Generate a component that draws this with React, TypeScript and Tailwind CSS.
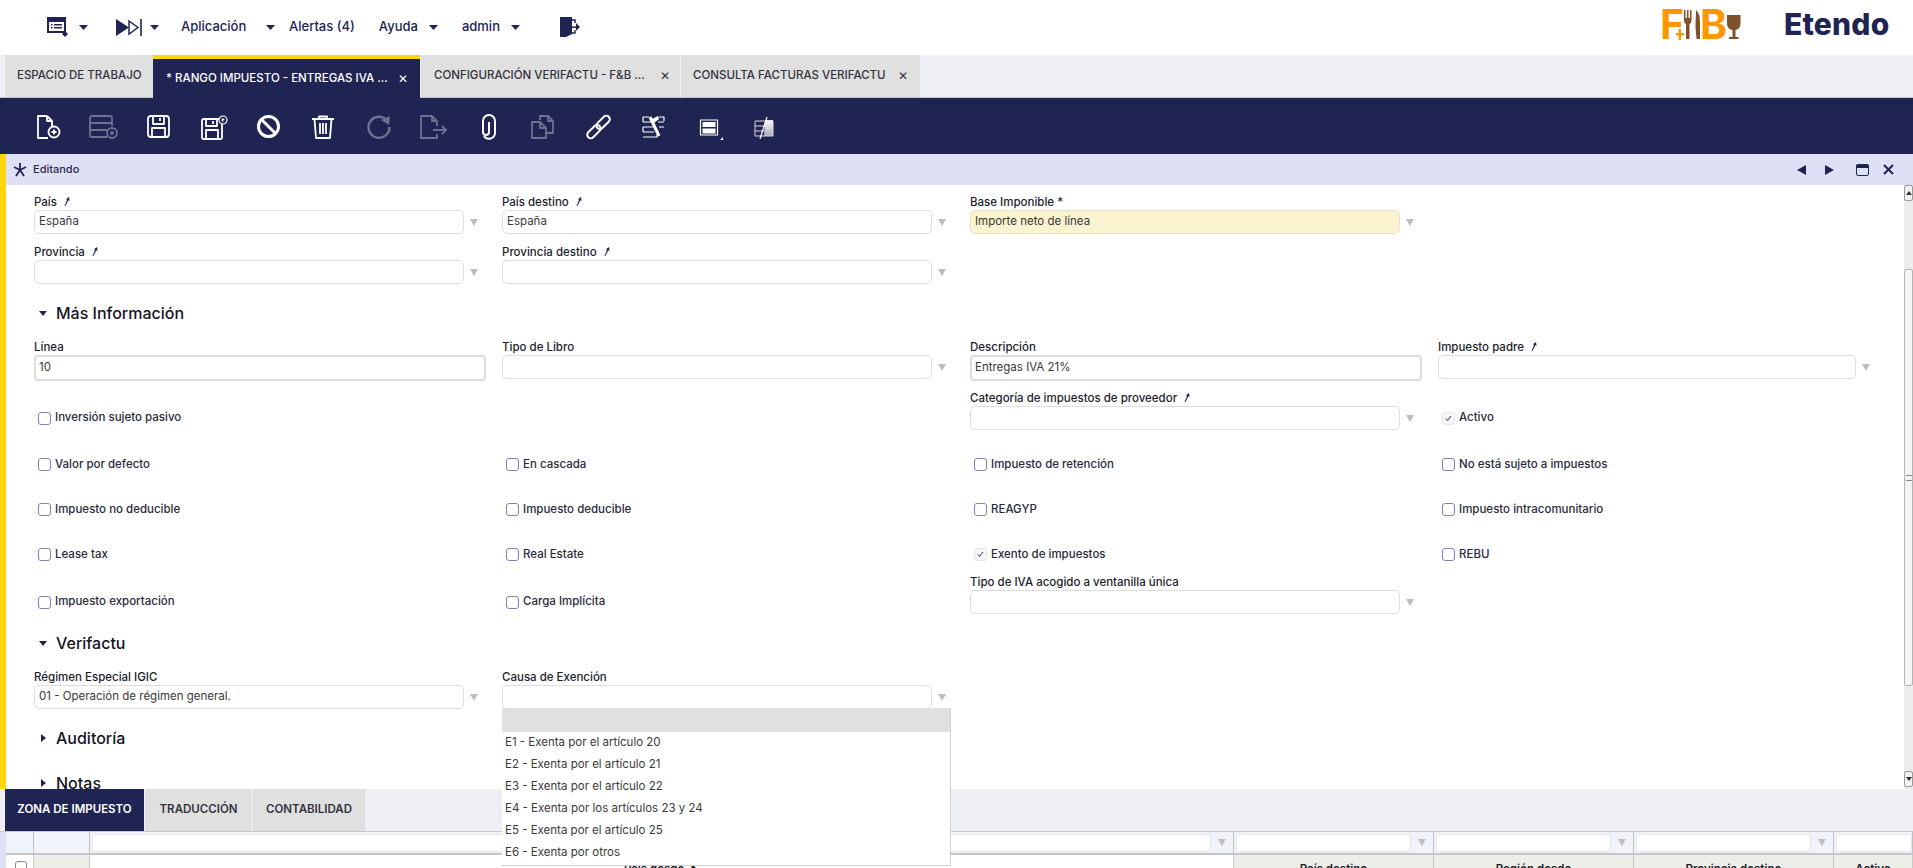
import type { ReactNode } from 'react'

const grey = '#6e7190'

function Caret({ color = '#202452' }: { color?: string }) {
  return (
    <svg width="9" height="5" viewBox="0 0 9 5" className="shrink-0">
      <path d="M0 0h9L4.5 5z" fill={color} />
    </svg>
  )
}

function Arrow() {
  return (
    <svg width="8" height="7" viewBox="0 0 8 7" className="shrink-0 ml-[6px]">
      <path d="M0 0h8L4 7z" fill="#bdbdbd" />
    </svg>
  )
}

function Pin() {
  return (
    <svg width="8" height="11" viewBox="0 0 8 11" className="inline-block ml-[6px] align-[-1px]">
      <path d="M1.5 10L4.2 3.6 2.6 3.4 6 1 6.6 5 5.4 4.2 2.4 10z" fill="#202452" />
    </svg>
  )
}

function Select({ value, required }: { value?: string; required?: boolean }) {
  return (
    <div className="flex items-center">
      <div className={`w-[430px] h-[24px] rounded-[5px] border flex items-center px-[4px] text-[11.5px] text-[#3a3a3a] ${required ? 'bg-[#faf3cf] border-[#e6e2c2]' : 'bg-white border-[#dedede]'}`}>
        {value}
      </div>
      <Arrow />
    </div>
  )
}

function TextInput({ value }: { value: string }) {
  return (
    <div className="w-[452px] h-[26px] rounded-[4px] border-2 border-[#dddddd] bg-white flex items-center px-[3px] text-[11.5px] text-[#3a3a3a]">
      {value}
    </div>
  )
}

function Label({ text, pin }: { text: string; pin?: boolean }) {
  return (
    <div className="h-[16px] leading-[16px] text-[11.5px] font-medium text-[#1d1d2e] whitespace-nowrap">
      {text}
      {pin && <Pin />}
    </div>
  )
}

function Check({ text, checked }: { text: string; checked?: boolean }) {
  return (
    <div className="flex items-center h-[24px] pl-[4px] text-[11.5px] font-medium text-[#2a2a3a] whitespace-nowrap">
      {checked ? (
        <span className="w-[13px] h-[13px] mr-[4px] rounded-[3px] border border-[#e6e6ec] bg-[#f7f7fa] flex items-center justify-center">
          <svg width="7" height="7" viewBox="0 0 7 7">
            <path d="M1 3.5l1.6 2L6 1" fill="none" stroke="#34345a" strokeWidth="1" />
          </svg>
        </span>
      ) : (
        <span className="w-[13px] h-[13px] mr-[4px] rounded-[3px] border border-[#8083b8] bg-white" />
      )}
      {text}
    </div>
  )
}

function Section({ text, open }: { text: string; open?: boolean }) {
  return (
    <div className="h-[45px]">
      <div className="h-[37px] flex items-center text-[#14141f] text-[16px] font-medium whitespace-nowrap">
        <svg width="8" height="8" viewBox="0 0 8 8" className="ml-[5px] mr-[9px]">
          <path d={open ? 'M0 2h8L4 7z' : 'M2 0l5 4-5 4z'} fill="#202452" />
        </svg>
        {text}
      </div>
    </div>
  )
}

function Row({ h, children, className = '' }: { h: string; children: ReactNode; className?: string }) {
  return <div className={`grid grid-cols-[468px_468px_468px_432px] ${h} ${className}`}>{children}</div>
}

function Field({ label, pin, value, required }: { label: string; pin?: boolean; value?: string; required?: boolean }) {
  return (
    <div>
      <Label text={label} pin={pin} />
      <Select value={value} required={required} />
    </div>
  )
}

function Tool({ children }: { children: ReactNode }) {
  return (
    <div className="w-[55px] shrink-0">
      <svg width="34" height="28" viewBox="0 0 34 28" fill="none" stroke="white" strokeWidth="1.8" strokeLinejoin="round">
        {children}
      </svg>
    </div>
  )
}

function Toolbar() {
  return (
    <div className="h-[56px] bg-[#202452] flex pl-[32px] pt-[15px] shrink-0">
      <Tool>
        <path d="M15 3H6v22h10M15 3l5 5v6M15 3v5h5" />
        <circle cx="22" cy="19" r="5.5" />
        <path d="M22 16.5v5M19.5 19h5" />
      </Tool>
      <Tool>
        <g stroke={grey}>
          <path d="M25 13V5a2 2 0 0 0-2-2H5a2 2 0 0 0-2 2v17a2 2 0 0 0 2 2h15M3 10h22M3 17h17" />
          <circle cx="25" cy="20" r="5" />
          <path d="M25 18v4M23 20h4" />
        </g>
      </Tool>
      <Tool>
        <rect x="6" y="3" width="21" height="21" rx="3" />
        <path d="M11 3v8h11V3M18 5v3M10 24v-9h13v9" />
      </Tool>
      <Tool>
        <rect x="5" y="6" width="20" height="20" rx="1.5" />
        <path d="M9 6v7h11V6M16 8v3M9 26v-9h12v9" />
        <circle cx="26" cy="7" r="4" fill="#202452" strokeWidth="1.2" />
        <path d="M24.7 5.7l2.6 2.6M27.3 5.7l-2.6 2.6" strokeWidth="1.2" />
      </Tool>
      <Tool>
        <circle cx="16.5" cy="13.5" r="10" strokeWidth="3" />
        <path d="M9.5 6.5l14 14" strokeWidth="3" />
      </Tool>
      <Tool>
        <path d="M5 6h22M12 6V3.5h8V6M7.5 6L9 25h14l1.5-19M13 10v11M16 10v11M19 10v11" />
      </Tool>
      <Tool>
        <path d="M24 6.5A10.5 10.5 0 1 0 27.5 14" stroke={grey} strokeWidth="2.4" />
        <path d="M19 7l9-4-1 9z" fill={grey} stroke="none" />
      </Tool>
      <Tool>
        <g stroke={grey}>
          <path d="M15 3H4v22h16v-4M15 3l5 5v5M15 3v5h5M16 17h12M25 13l4 4-4 4" />
        </g>
      </Tool>
      <Tool>
        <path d="M17 9v10a3 3 0 0 1-6 0V8a6 6 0 0 1 12 0v12a6 6 0 0 1-11 3" strokeWidth="2" />
      </Tool>
      <Tool>
        <g stroke={grey}>
          <path d="M13 7V3h8l5 5v12h-7M21 3v5h5M5 9h8l6 6v10H5zM13 9v6h6" />
        </g>
      </Tool>
      <Tool>
        <g transform="rotate(-45 16.5 14)" strokeWidth="2">
          <rect x="2" y="10.5" width="16" height="7" rx="3.5" />
          <rect x="15" y="10.5" width="16" height="7" rx="3.5" />
        </g>
      </Tool>
      <Tool>
        <path d="M6 4h6M22 4h5v4M6 9h8M21 9h6M6 14h10M22 14h5M6 19h11M6 24h14V22M6 4v5M6 14v5" strokeWidth="1.2" />
        <path d="M13 4l9 19" strokeWidth="3" />
        <path d="M21 3l-6 3 2 4 5-4z" fill="white" stroke="none" />
      </Tool>
      <Tool>
        <rect x="8.5" y="7" width="17" height="15" strokeWidth="1.2" />
        <rect x="10.5" y="9" width="13" height="5" fill="white" stroke="none" />
        <rect x="10.5" y="15.5" width="13" height="5" fill="white" stroke="none" />
        <path d="M31 24v3h-3z" fill="white" stroke="none" />
      </Tool>
      <Tool>
        <defs>
          <linearGradient id="fade" x1="0" y1="0" x2="0" y2="1">
            <stop offset="0" stopColor="#ffffff" />
            <stop offset="1" stopColor="#a9a9b5" />
          </linearGradient>
        </defs>
        <path d="M18 7h8v16h-9z" fill="url(#fade)" stroke="none" />
        <path d="M8 8h18v15H8zM8 13h10M8 18h9" stroke="#d8d8de" strokeWidth="1" />
        <path d="M13 26L20 4" strokeWidth="1.2" />
      </Tool>
    </div>
  )
}

function TopBar() {
  return (
    <div className="h-[55px] bg-white flex items-center shrink-0 text-[#202452] text-[13px] font-medium">
      <div className="flex items-center w-[1661px] pl-[47px] -mt-[1px]">
        <svg width="21" height="20" viewBox="0 0 21 20" className="mr-[11px]">
          <path d="M0 0h19v16H0z" fill="#202452" />
          <path d="M2 5h15v9H2z" fill="white" />
          <path d="M4 7h1.5v1.5H4zM7 7h8v1.5H7zM4 10h1.5v1.5H4zM7 10h8v1.5H7z" fill="#202452" />
          <path d="M18 14l3 3-3 3-3-3z" fill="#202452" />
        </svg>
        <Caret />
        <svg width="28" height="17" viewBox="0 0 28 17" className="ml-[27px] mr-[7px]">
          <path d="M1 0l13 8.5L1 17z" fill="#202452" />
          <path d="M14 2l9 6.5-9 6.5z" fill="none" stroke="#202452" strokeWidth="1.5" />
          <path d="M26 0v17" stroke="#202452" strokeWidth="1.6" />
        </svg>
        <Caret />
        <span className="ml-[22px] w-[85px]">Aplicación</span>
        <Caret />
        <span className="ml-[14px]">Alertas (4)</span>
        <span className="ml-[24px] mr-[11px]">Ayuda</span>
        <Caret />
        <span className="ml-[24px] mr-[11px]">admin</span>
        <Caret />
        <svg width="20" height="20" viewBox="0 0 20 20" className="ml-[40px]">
          <path d="M0 0h12v17l-6 3H0z" fill="#202452" />
          <path d="M12 3h3v3M15 13v3h-3" fill="none" stroke="#202452" strokeWidth="1.4" />
          <path d="M11 9.5h5V6l4 4-4 4v-3h-5z" fill="#202452" />
        </svg>
      </div>
      <svg width="80" height="32" viewBox="0 0 80 32" className="-mt-[5px]">
        <text x="-1" y="30" fontSize="41" fontWeight="700" fill="#ff9800" fontFamily="Inter, sans-serif">F</text>
        <path d="M15 24h2.5v-4h2.5v4h3v2.5h-3V31h-2.500v-4.500H15z" fill="#ff9800" />
        <path d="M23 1h1.500v8h1.500V1h1.500v8h1.500V1h1.500v10q0 3-2 4v15h-3.500V15q-2-1-2-4z" fill="#7d522c" />
        <path d="M35 1q4 3 4 13v16h-3.500l-1-12z" fill="#7d522c" />
        <text x="39" y="30" fontSize="41" fontWeight="700" fill="#ff9800" fontFamily="Inter, sans-serif">B</text>
        <path d="M66 6h13.500v8q0 6-5 7v7h3v2h-9.500v-2h3.500v-7q-5.500-1-5.500-7z" fill="#7d522c" />
      </svg>
      <span className="ml-[43px] text-[30px] font-extrabold tracking-[0.2px] -mt-[7px] font-[Inter,sans-serif]">Etendo</span>
    </div>
  )
}

function TabBar() {
  return (
    <div className="h-[43px] bg-[#eef0f5] flex pl-[5px] border-b border-[#c4c6cc] shrink-0 text-[11.5px] font-medium text-[#33333f] whitespace-nowrap">
      <div className="w-[148px] bg-[#e0e0e0] flex items-center pl-[12px]">ESPACIO DE TRABAJO</div>
      <div className="w-[267px] h-[43px] bg-[#202452] border-t-[4px] border-[#ffd60e] text-white flex items-center pl-[13px]">
        <span className="w-[232px]">* RANGO IMPUESTO - ENTREGAS IVA ...</span>
        <span className="text-[12px]">✕</span>
      </div>
      <div className="w-[259px] ml-[1px] bg-[#e0e0e0] flex items-center pl-[13px]">
        <span className="w-[226px]">CONFIGURACIÓN VERIFACTU - F&amp;B ...</span>
        <span className="text-[12px]">✕</span>
      </div>
      <div className="w-[239px] ml-[1px] bg-[#e0e0e0] flex items-center pl-[12px]">
        <span className="w-[205px]">CONSULTA FACTURAS VERIFACTU</span>
        <span className="text-[12px]">✕</span>
      </div>
    </div>
  )
}

function StatusBar() {
  return (
    <div className="h-[31px] bg-[#dee0f6] flex items-center shrink-0 text-[11px] font-medium text-[#2c2c48]">
      <svg width="14" height="14" viewBox="0 0 14 14" className="ml-[7px] mr-[6px]">
        <path d="M7 0v6M7 7L1 4M7 7l6-3M7 7l-4 6M7 7l4 6" stroke="#202452" strokeWidth="1.8" fill="none" />
      </svg>
      Editando
      <div className="ml-auto flex items-center pr-[19px]">
        <svg width="9" height="10" viewBox="0 0 9 10"><path d="M9 0v10L0 5z" fill="#202452" /></svg>
        <svg width="9" height="10" viewBox="0 0 9 10" className="ml-[19px]"><path d="M0 0v10l9-5z" fill="#202452" /></svg>
        <svg width="13" height="12" viewBox="0 0 13 12" className="ml-[22px]">
          <rect x="0.500" y="0.500" width="12" height="11" rx="1.500" fill="#dee0f6" stroke="#202452" />
          <rect x="0.500" y="0.500" width="12" height="3.500" fill="#202452" />
        </svg>
        <svg width="11" height="11" viewBox="0 0 11 11" className="ml-[14px]">
          <path d="M1 1l9 9M10 1l-9 9" stroke="#202452" strokeWidth="2" />
        </svg>
      </div>
    </div>
  )
}

function Scrollbar() {
  return (
    <div className="w-[9px] shrink-0 bg-[#ececec] flex flex-col pb-[2px]">
      <div className="h-[16px] shrink-0 bg-[#f2f2f2] border border-[#9a9a9a] rounded-[2px] flex items-center justify-center">
        <svg width="6" height="4" viewBox="0 0 6 4"><path d="M3 0l3 4H0z" fill="#333" /></svg>
      </div>
      <div className="h-[68px] shrink-0" />
      <div className="h-[417px] shrink-0 bg-[#f4f4f4] border border-[#b4b4b4] rounded-[2px] flex items-center justify-center">
        <div className="w-[6px] h-[6px] border-y border-[#888]" />
      </div>
      <div className="flex-1" />
      <div className="h-[16px] shrink-0 bg-[#f2f2f2] border border-[#9a9a9a] rounded-[2px] flex items-center justify-center">
        <svg width="6" height="4" viewBox="0 0 6 4"><path d="M0 0h6L3 4z" fill="#333" /></svg>
      </div>
    </div>
  )
}

function Form() {
  return (
    <div className="flex-1 overflow-hidden pl-[28px] pt-[9px]">
      <Row h="h-[50px]">
        <Field label="País" pin value="España" />
        <Field label="País destino" pin value="España" />
        <Field label="Base Imponible *" value="Importe neto de línea" required />
      </Row>
      <Row h="h-[50px]">
        <Field label="Provincia" pin />
        <Field label="Provincia destino" pin />
      </Row>
      <Section text="Más Información" open />
      <Row h="h-[51px]">
        <div>
          <Label text="Línea" />
          <TextInput value="10" />
        </div>
        <Field label="Tipo de Libro" />
        <div>
          <Label text="Descripción" />
          <TextInput value="Entregas IVA 21%" />
        </div>
        <Field label="Impuesto padre" pin />
      </Row>
      <Row h="h-[52px]">
        <div className="pt-[16px]"><Check text="Inversión sujeto pasivo" /></div>
        <div />
        <Field label="Categoría de impuestos de proveedor" pin />
        <div className="pt-[16px]"><Check text="Activo" checked /></div>
      </Row>
      <Row h="h-[45px]" className="items-center">
        <Check text="Valor por defecto" />
        <Check text="En cascada" />
        <Check text="Impuesto de retención" />
        <Check text="No está sujeto a impuestos" />
      </Row>
      <Row h="h-[45px]" className="items-center">
        <Check text="Impuesto no deducible" />
        <Check text="Impuesto deducible" />
        <Check text="REAGYP" />
        <Check text="Impuesto intracomunitario" />
      </Row>
      <Row h="h-[45px]" className="items-center">
        <Check text="Lease tax" />
        <Check text="Real Estate" />
        <Check text="Exento de impuestos" checked />
        <Check text="REBU" />
      </Row>
      <Row h="h-[50px]" className="-mt-[3px]">
        <div className="pt-[16px]"><Check text="Impuesto exportación" /></div>
        <div className="pt-[16px]"><Check text="Carga Implícita" /></div>
        <Field label="Tipo de IVA acogido a ventanilla única" />
      </Row>
      <Section text="Verifactu" open />
      <Row h="h-[50px]">
        <Field label="Régimen Especial IGIC" value="01 - Operación de régimen general." />
        <Field label="Causa de Exención" />
      </Row>
      <Section text="Auditoría" />
      <Section text="Notas" />
    </div>
  )
}

function FilterCell({ className, arrow }: { className: string; arrow?: boolean }) {
  return (
    <div className={`flex items-center h-[21px] border-r border-[#bfc1c4] bg-[#f0f3f9] pl-[2px] ${className}`}>
      <div className="flex-1 h-[18px] bg-white border border-[#e6e6e6]" />
      {arrow && (
        <div className="w-[22px] flex justify-center">
          <svg width="8" height="7" viewBox="0 0 8 7"><path d="M0 0h8L4 7z" fill="#bdbdbd" /></svg>
        </div>
      )}
    </div>
  )
}

function HeadCell({ text, className }: { text: string; className: string }) {
  return (
    <div className={`h-[16px] border-r border-[#c8cac6] bg-[#eceee8] text-center text-[11.5px] font-semibold text-[#1d1d2e] leading-[15px] pt-[7px] overflow-hidden whitespace-nowrap ${className}`}>
      {text}
    </div>
  )
}

function BottomGrid() {
  return (
    <div className="flex-1 flex overflow-hidden border-t border-[#c4c6cc]">
      <div className="w-[6px] shrink-0 bg-[#dee0f6]" />
      <div className="flex-1 overflow-hidden">
        <div className="flex border-b-2 border-[#c4c6cc]">
          <div className="w-[28px] h-[21px] bg-[#f0f3f9] border-r border-[#bfc1c4]" />
          <div className="w-[56px] h-[21px] bg-[#f0f3f9] border-r border-[#bfc1c4]" />
          <FilterCell className="w-[1144px]" arrow />
          <FilterCell className="w-[200px]" arrow />
          <FilterCell className="w-[200px]" arrow />
          <FilterCell className="w-[200px]" arrow />
          <FilterCell className="w-[79px]" />
        </div>
        <div className="flex">
          <div className="w-[28px] h-[16px] bg-white border-r border-[#c8cac6] pl-[9px] pt-[6px]">
            <div className="w-[12px] h-[13px] rounded-[3px] border border-[#8083b8] bg-white" />
          </div>
          <div className="w-[56px] h-[16px] bg-[#eceee8] border-r border-[#c8cac6]" />
          <HeadCell text="País desde ▲" className="w-[1144px] bg-white" />
          <HeadCell text="País destino" className="w-[200px]" />
          <HeadCell text="Región desde" className="w-[200px]" />
          <HeadCell text="Provincia destino" className="w-[200px]" />
          <HeadCell text="Activo" className="w-[79px]" />
        </div>
      </div>
    </div>
  )
}

const options = [
  'E1 - Exenta por el artículo 20',
  'E2 - Exenta por el artículo 21',
  'E3 - Exenta por el artículo 22',
  'E4 - Exenta por los artículos 23 y 24',
  'E5 - Exenta por el artículo 25',
  'E6 - Exenta por otros',
]

export default function App() {
  return (
    <div className="relative w-[1913px] h-[868px] overflow-hidden bg-white flex flex-col font-[Inter,sans-serif]">
      <TopBar />
      <TabBar />
      <Toolbar />
      <div className="h-[635px] flex shrink-0">
        <div className="w-[6px] bg-[#ffd60e] shrink-0" />
        <div className="flex-1 flex flex-col">
          <StatusBar />
          <div className="h-[604px] flex">
            <Form />
            <Scrollbar />
          </div>
        </div>
      </div>
      <div className="h-[42px] bg-[#eef0f5] flex pl-[5px] shrink-0 text-[11.5px] font-semibold text-[#33333f] whitespace-nowrap">
        <div className="w-[139px] bg-[#202452] text-white flex items-center justify-center">ZONA DE IMPUESTO</div>
        <div className="w-[107px] ml-[1px] bg-[#e0e0e0] flex items-center justify-center">TRADUCCIÓN</div>
        <div className="w-[112px] ml-[1px] bg-[#e0e0e0] flex items-center justify-center">CONTABILIDAD</div>
      </div>
      <BottomGrid />
      <div className="absolute left-[502px] top-[708px] w-[449px] h-[158px] bg-white border-r border-b border-[#d0d0d0] text-[11.5px] text-[#3a3a3a]">
        <div className="h-[24px] bg-[#e0e0e0]" />
        {options.map((o) => (
          <div key={o} className="h-[22px] flex items-center pl-[3px] whitespace-nowrap">{o}</div>
        ))}
      </div>
    </div>
  )
}
